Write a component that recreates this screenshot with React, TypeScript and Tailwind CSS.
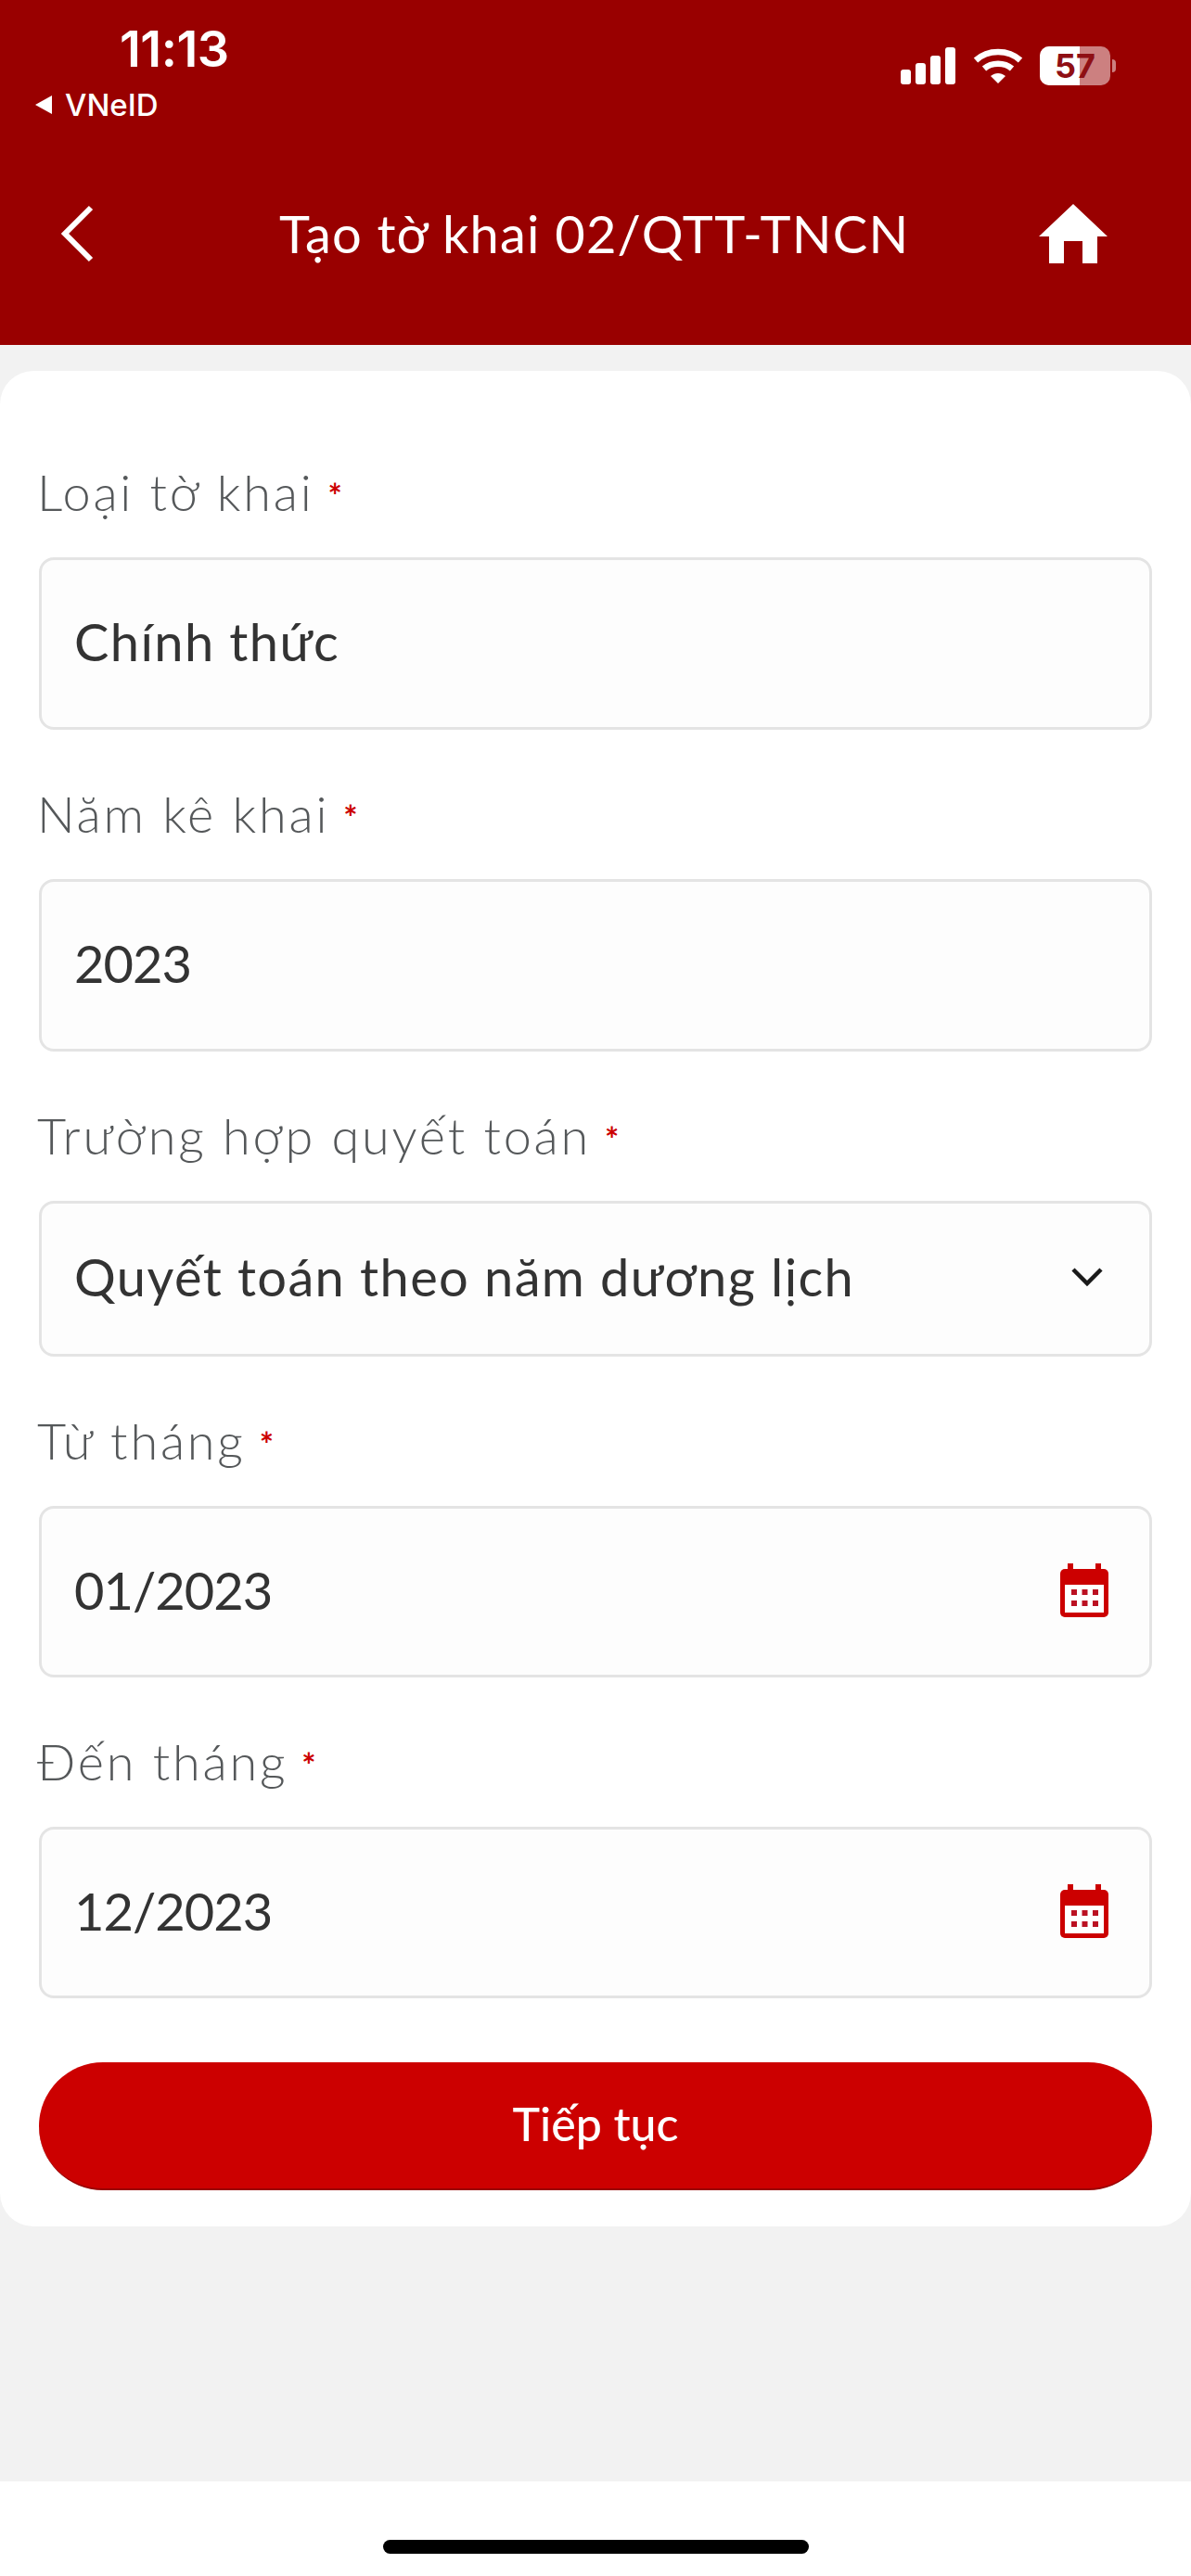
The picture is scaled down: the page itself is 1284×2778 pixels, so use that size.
import { FC, ReactNode } from 'react';

const Calendar: FC = () => (
  <svg width="52" height="58" viewBox="0 0 52 58" className="shrink-0">
    <rect x="8" y="0" width="6" height="10" fill="#cc0000" />
    <rect x="38" y="0" width="6" height="10" fill="#cc0000" />
    <rect x="0" y="6" width="52" height="52" rx="5" fill="#cc0000" />
    <rect x="5" y="23" width="42" height="30" fill="#ffffff" />
    {[12, 23.5, 35].map((x) =>
      [28, 40].map((y) => <rect key={`${x}-${y}`} x={x} y={y} width="6" height="6" fill="#bb1122" />),
    )}
  </svg>
);

const Chevron: FC = () => (
  <svg width="36" height="24" viewBox="0 0 36 24" fill="none" className="mr-[5px] shrink-0">
    <path d="M3 4 L18 19 L33 4" stroke="#1a1a1a" strokeWidth="4.5" />
  </svg>
);

interface FieldProps {
  label: string;
  value: string;
  boxClass: string;
  valueClass?: string;
  icon?: ReactNode;
}

const Field: FC<FieldProps> = ({ label, value, boxClass, valueClass = 'tracking-[1.4px]', icon }) => (
  <div className="flex flex-col">
    <div className="-ml-[2px] flex h-[68px] items-start text-[54px] leading-[68px] font-light tracking-[2.8px] text-[#55585a]">
      <span>{label}</span>
      <span className="ml-[15px] text-[36px] leading-[74px] font-bold text-[#cc0000]">*</span>
    </div>
    <div
      className={`mt-[36px] flex items-center justify-between rounded-[16px] border-[3px] border-[#e4e4e4] bg-[#fdfdfd] pr-[44px] pb-[4px] pl-[35px] text-[56px] text-[#333333] ${boxClass}`}
    >
      <span className={valueClass}>{value}</span>
      {icon}
    </div>
  </div>
);

export default function App() {
  return (
    <div className="flex h-[2778px] w-[1284px] flex-col bg-[#f2f2f2] font-['Lato',sans-serif]">
      <header className="flex h-[372px] flex-col bg-[#990000] text-white">
        <div className="flex h-[136px] items-start justify-between pt-[24px] pr-[81px] pl-[36px]">
          <div className="flex flex-col">
            <span className="ml-[93px] font-['Inter',sans-serif] text-[54px] leading-[58px] font-semibold tracking-[-0.5px]">
              11:13
            </span>
            <div className="mt-[11px] flex items-center gap-[12px] font-['Inter',sans-serif] text-[33px] leading-[40px] font-medium">
              <svg width="22" height="22" viewBox="0 0 22 22">
                <path d="M20 1 V21 L2 11 Z" fill="#ffffff" />
              </svg>
              <span>VNeID</span>
            </div>
          </div>
          <div className="mt-[26px] flex items-center gap-[18px]">
            <svg width="60" height="40" viewBox="0 0 60 40" fill="#ffffff">
              <rect x="0" y="24" width="11" height="16" rx="3" />
              <rect x="16" y="17" width="11" height="23" rx="3" />
              <rect x="32" y="9" width="11" height="31" rx="3" />
              <rect x="48" y="0" width="11" height="40" rx="3" />
            </svg>
            <svg width="54" height="38" viewBox="0 0 54 38" fill="none" stroke="#ffffff" strokeWidth="6.5">
              <path d="M3 13 C16 1 38 1 51 13" />
              <path d="M12 22 C20 15 34 15 42 22" />
              <path d="M19 30 L27 38 L35 30 C30 26 24 26 19 30 Z" fill="#ffffff" stroke="none" />
            </svg>
            <div className="flex items-center">
              <div className="relative flex h-[42px] w-[76px] items-center justify-center overflow-hidden rounded-[10px] bg-[#cc8080]">
                <div className="absolute inset-y-0 left-0 w-[43px] bg-white" />
                <span className="relative font-['Inter',sans-serif] text-[36px] leading-none font-bold text-[#8f0f14]">
                  57
                </span>
              </div>
              <div className="ml-[2px] h-[14px] w-[4px] rounded-r-full bg-[#cc8080]" />
            </div>
          </div>
        </div>
        <div className="mt-[84px] flex items-center pr-[90px] pl-[64px]">
          <div className="w-[237px]">
            <svg width="38" height="62" viewBox="0 0 38 62" fill="none">
              <path d="M34 3 L6 31 L34 59" stroke="#ffffff" strokeWidth="6" />
            </svg>
          </div>
          <h1 className="text-[56px] leading-[64px] font-normal tracking-[1.2px]">Tạo tờ khai 02/QTT-TNCN</h1>
          <svg width="74" height="64" viewBox="0 0 74 64" fill="#ffffff" className="ml-auto">
            <path d="M37 0 L74 35 H63 V64 H47 V40 H27 V64 H11 V35 H0 Z" />
          </svg>
        </div>
      </header>

      <main className="mt-[28px] flex h-[2001px] flex-col rounded-[36px] bg-white px-[42px] pt-[97px]">
        <div className="flex flex-col gap-[57px]">
          <Field label="Loại tờ khai" value="Chính thức" boxClass="h-[186px]" />
          <Field label="Năm kê khai" value="2023" boxClass="h-[186px]" valueClass="tracking-[-1px]" />
          <Field label="Trường hợp quyết toán" value="Quyết toán theo năm dương lịch" boxClass="h-[168px]" icon={<Chevron />} />
          <Field label="Từ tháng" value="01/2023" boxClass="h-[185px]" valueClass="tracking-[-1px]" icon={<Calendar />} />
          <Field label="Đến tháng" value="12/2023" boxClass="h-[185px]" valueClass="tracking-[-1px]" icon={<Calendar />} />
        </div>
        <button className="mt-[69px] flex h-[138px] items-center justify-center rounded-full border-b-[2px] border-[#990000] bg-[#cc0000] pb-[4px] text-[50px] font-medium text-white">
          Tiếp tục
        </button>
      </main>

      <footer className="mt-auto flex h-[102px] justify-center bg-white pt-[63px]">
        <div className="h-[15px] w-[459px] rounded-full bg-black" />
      </footer>
    </div>
  );
}
